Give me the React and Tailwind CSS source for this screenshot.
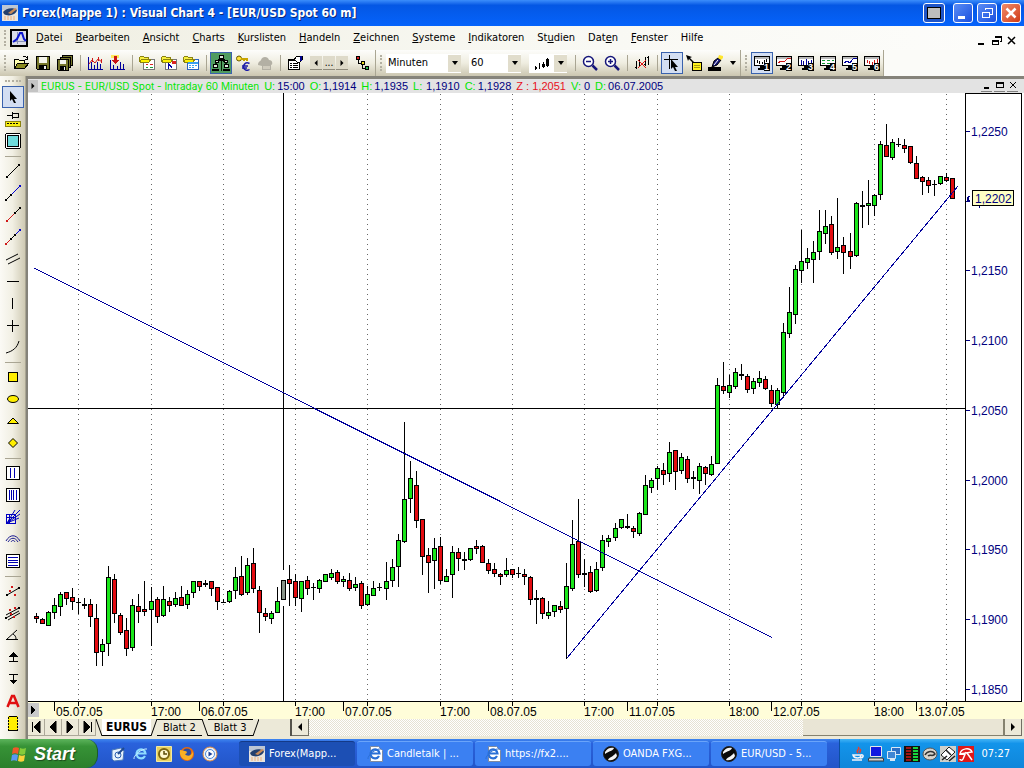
import { clsx } from "clsx";

// x, high, low, body top, body bottom, kind (u = up, d = down, x = doji)
const CANDLES = [
  [36, 613, 623, 616, 619, "d"], [42, 618, 624, 619, 624, "d"], [48, 611, 626, 612, 626, "u"],
  [54, 598, 619, 605, 613, "u"], [60, 592, 616, 594, 607, "u"], [66, 592, 605, 592, 599, "d"],
  [72, 588, 610, 597, 602, "d"], [78, 598, 614, 602, 603, "x"], [84, 598, 609, 604, 606, "x"],
  [90, 599, 627, 604, 617, "d"], [96, 604, 666, 618, 653, "d"], [102, 639, 666, 644, 652, "u"],
  [108, 566, 656, 577, 644, "u"], [114, 574, 623, 579, 614, "d"], [120, 613, 635, 615, 633, "d"],
  [126, 618, 656, 630, 649, "d"], [132, 599, 651, 605, 648, "u"], [138, 594, 623, 606, 612, "d"],
  [144, 581, 616, 609, 612, "d"], [151, 587, 646, 601, 610, "u"], [157, 597, 623, 599, 617, "d"],
  [163, 586, 617, 599, 616, "u"], [169, 597, 612, 601, 606, "d"], [175, 592, 607, 598, 605, "u"],
  [181, 586, 606, 597, 606, "d"], [187, 590, 609, 594, 605, "u"], [193, 581, 598, 581, 593, "u"],
  [199, 581, 591, 581, 587, "d"], [205, 580, 587, 583, 585, "x"], [211, 581, 596, 581, 589, "d"],
  [217, 587, 610, 587, 602, "d"], [223, 599, 603, 602, 603, "x"], [229, 590, 603, 591, 602, "u"],
  [235, 567, 599, 577, 591, "u"], [241, 556, 596, 576, 595, "d"], [247, 558, 595, 565, 593, "u"],
  [253, 548, 593, 563, 589, "d"], [259, 586, 633, 590, 613, "d"], [265, 608, 621, 613, 617, "d"],
  [271, 611, 624, 613, 619, "u"], [277, 587, 613, 601, 613, "u"], [283, 580, 600, 580, 600, "c"],
  [289, 565, 606, 579, 584, "d"], [295, 574, 606, 581, 598, "d"], [301, 581, 612, 581, 599, "u"],
  [307, 576, 595, 580, 589, "d"], [313, 583, 600, 587, 588, "x"], [319, 579, 593, 580, 589, "u"],
  [325, 574, 582, 574, 582, "u"], [331, 569, 580, 573, 578, "u"], [337, 570, 584, 572, 582, "d"],
  [343, 576, 587, 579, 582, "u"], [349, 573, 591, 580, 589, "d"], [355, 577, 591, 584, 588, "u"],
  [361, 581, 609, 583, 606, "d"], [367, 586, 606, 594, 605, "u"], [373, 581, 596, 588, 596, "u"],
  [379, 583, 591, 587, 588, "x"], [386, 562, 600, 581, 589, "u"], [392, 559, 587, 567, 581, "u"],
  [398, 534, 587, 540, 567, "u"], [404, 422, 543, 499, 542, "u"], [410, 461, 513, 478, 499, "u"],
  [416, 471, 528, 485, 521, "d"], [422, 519, 575, 519, 557, "d"], [428, 548, 593, 555, 563, "d"],
  [434, 538, 589, 548, 561, "u"], [440, 537, 584, 546, 581, "d"], [446, 569, 582, 576, 582, "u"],
  [452, 546, 598, 552, 575, "u"], [458, 548, 571, 552, 559, "d"], [464, 552, 570, 559, 561, "x"],
  [470, 548, 561, 548, 560, "u"], [476, 540, 554, 546, 549, "d"], [482, 545, 563, 546, 563, "d"],
  [488, 559, 574, 563, 571, "d"], [494, 563, 577, 569, 574, "d"], [500, 573, 585, 574, 577, "d"],
  [506, 558, 577, 570, 575, "u"], [512, 569, 578, 569, 575, "d"], [518, 567, 578, 573, 574, "x"],
  [524, 569, 585, 574, 577, "d"], [530, 576, 605, 577, 600, "d"], [536, 590, 624, 598, 600, "x"],
  [542, 597, 619, 598, 614, "d"], [548, 601, 619, 612, 616, "u"], [554, 605, 617, 605, 612, "u"],
  [560, 601, 613, 606, 610, "d"], [566, 563, 659, 586, 609, "u"], [572, 520, 591, 544, 589, "u"],
  [578, 499, 578, 541, 575, "d"], [584, 559, 587, 573, 575, "x"], [590, 566, 593, 572, 592, "d"],
  [596, 562, 592, 569, 591, "u"], [602, 535, 571, 540, 568, "u"], [608, 535, 547, 538, 542, "u"],
  [615, 523, 541, 528, 538, "u"], [621, 519, 529, 519, 528, "u"], [627, 514, 529, 526, 528, "x"],
  [633, 526, 538, 528, 532, "d"], [639, 512, 536, 513, 534, "u"], [645, 475, 515, 485, 515, "u"],
  [651, 478, 493, 480, 488, "u"], [657, 466, 490, 468, 479, "u"], [663, 463, 485, 470, 475, "d"],
  [669, 442, 482, 452, 474, "u"], [675, 450, 490, 450, 472, "d"], [681, 453, 474, 457, 471, "u"],
  [687, 456, 483, 459, 479, "d"], [693, 471, 489, 477, 479, "x"], [699, 463, 494, 466, 481, "u"],
  [705, 466, 485, 467, 474, "d"], [711, 456, 476, 464, 475, "u"], [717, 378, 464, 385, 464, "u"],
  [723, 362, 394, 386, 391, "d"], [729, 375, 398, 385, 393, "u"], [735, 368, 389, 372, 387, "u"],
  [741, 364, 380, 374, 376, "x"], [747, 374, 393, 376, 390, "d"], [753, 378, 394, 381, 389, "u"],
  [759, 371, 387, 378, 383, "u"], [765, 376, 390, 379, 389, "d"], [771, 385, 407, 390, 404, "d"],
  [777, 388, 408, 390, 405, "u"], [783, 323, 398, 332, 393, "u"], [789, 287, 338, 312, 334, "u"],
  [795, 265, 324, 269, 315, "u"], [801, 230, 283, 261, 271, "u"], [807, 248, 269, 258, 263, "u"],
  [813, 241, 283, 252, 260, "u"], [819, 210, 260, 231, 252, "u"], [825, 210, 244, 226, 234, "u"],
  [831, 216, 255, 224, 253, "d"], [837, 198, 259, 247, 252, "u"], [843, 237, 274, 245, 253, "d"],
  [850, 233, 269, 251, 257, "d"], [856, 202, 257, 203, 256, "u"], [862, 191, 228, 205, 207, "x"],
  [868, 180, 225, 203, 206, "u"], [874, 194, 216, 195, 206, "u"], [880, 141, 200, 144, 195, "u"],
  [886, 124, 157, 145, 157, "d"], [892, 139, 160, 142, 158, "u"], [898, 138, 147, 144, 145, "x"],
  [904, 139, 153, 145, 149, "d"], [910, 146, 164, 146, 163, "d"], [916, 156, 179, 163, 179, "d"],
  [922, 176, 195, 177, 182, "d"], [928, 177, 193, 180, 186, "d"], [934, 180, 196, 184, 185, "x"],
  [940, 176, 185, 176, 184, "u"], [946, 173, 182, 177, 181, "d"], [952, 178, 199, 178, 199, "d"],
];

const CANDLE_FILL = { u: "#1ae61a", d: "#e30b10", c: "#8a958a" };

const GRID = [78, 151, 223, 295, 367, 440, 512, 584, 657, 729, 801, 874, 946];
const DAY_TICKS = [54, 199, 343, 488, 627, 771, 916];

const TIME_LABELS = [
  [56, "05.07.05"], [151, "17:00"], [201, "06.07.05"], [295, "17:00"], [345, "07.07.05"],
  [440, "17:00"], [490, "08.07.05"], [584, "17:00"], [629, "11.07.05"], [729, "18:00"],
  [773, "12.07.05"], [874, "18:00"], [918, "13.07.05"],
];

// 1,2200 is covered by the last price tag
const PRICES = [
  [131, "1,2250"], [270, "1,2150"], [340, "1,2100"], [410, "1,2050"],
  [480, "1,2000"], [549, "1,1950"], [619, "1,1900"], [689, "1,1850"],
];

// label before / accelerator / after
const MENU = [
  ["", "D", "atei"], ["", "B", "earbeiten"], ["", "A", "nsicht"], ["", "C", "harts"],
  ["", "K", "urslisten"], ["", "H", "andeln"], ["", "Z", "eichnen"], ["", "S", "ysteme"],
  ["", "I", "ndikatoren"], ["St", "u", "dien"], ["Dat", "e", "n"], ["", "F", "enster"], ["Hilfe", "", ""],
];

const QUOTE = [
  ["U:", "15:00"], ["O:", "1,1914"], ["H:", "1,1935"], ["L:", "1,1910"], ["C:", "1,1928"],
  ["Z :", "1,2051"], ["V:", "0"], ["D:", "06.07.2005"],
];

const Icon = ({ children, className = "w-4 h-4", size = 16, smooth }) => (
  <svg
    viewBox={`0 0 ${size} ${size}`}
    className={clsx("shrink-0", className)}
    fill="none"
    stroke="#000"
    shapeRendering={smooth ? "auto" : "crispEdges"}
    aria-hidden="true"
  >
    {children}
  </svg>
);

const Pointer = ({ x = 0, y = 0 }) => (
  <path
    transform={`translate(${x} ${y})`}
    d="M0 0v10l2-2 2 4h2l-2-4h3z"
    fill="#000"
    stroke="none"
    shapeRendering="auto"
  />
);

/* ---------- toolbar icons ---------- */

const OpenIcon = () => (
  <Icon>
    <path d="M1.5 13.5v-9h4l1 1h5v3" fill="#ffffb0" />
    <path d="M1.5 13.5l3-5h11l-4 5z" fill="#8a8a20" />
    <path d="M9.500 2.500c2-2 4-1 5 1M14.500 1v3h-3" />
  </Icon>
);

const SaveIcon = () => (
  <Icon>
    <path d="M1.500 1.500h13v13h-12l-1-1z" fill="#77772b" />
    <path d="M4 2h8v6h-8z" fill="#f4f4ec" stroke="none" />
    <path d="M4 10h8v4h-8z" fill="#000" stroke="none" />
    <path d="M9 11h2v3h-2z" fill="#eee" stroke="none" />
  </Icon>
);

const SaveAllIcon = () => (
  <Icon>
    <path d="M5.500.500h10v10h-10z" fill="#77772b" />
    <path d="M3.500 2.500h10v10h-10z" fill="#77772b" />
    <path d="M.500 4.500h11v11h-10l-1-1z" fill="#77772b" />
    <path d="M3 5h6v4h-6z" fill="#f4f4ec" stroke="none" />
    <path d="M3 11h6v4h-6z" fill="#000" stroke="none" />
    <path d="M7 12h1v3h-1z" fill="#eee" stroke="none" />
  </Icon>
);

const BarsIcon = () => (
  <Icon>
    <path d="M1.500 2v12h14" stroke="#00009a" />
    <path d="M4.500 7v7M7.500 10v4M10.500 7v7M13.500 9v5" stroke="#00009a" />
    <path shapeRendering="auto" d="M2 9l3-4 3 3 3-4 4 3" stroke="#d01818" />
    <path d="M11.500 2v4M5.500 3v4M14.500 4v4" stroke="#d01818" />
  </Icon>
);

const BarsArrowIcon = () => (
  <Icon>
    <path d="M1.500 5v9h14" stroke="#00009a" />
    <path d="M4.500 10v4M8.500 11v3M11.500 7v7M14.500 9v5" stroke="#00009a" />
    <path d="M2 0h8v3h-8z" fill="#ffe95c" stroke="none" />
    <path d="M5 1h3v4h2l-3.500 4-3.500-4h2z" fill="#c81414" stroke="none" />
  </Icon>
);

const FolderChart = ({ variant }) => (
  <Icon>
    <path d="M4.500 4.500h11v10h-11z" fill="#fff" stroke={variant === "grid" ? "#2a62c0" : "#777"} />
    <path d="M.500 2.500l1-1h3l1 1h4v4h-9z" fill="#f8f040" stroke="#8a8210" />
    <path d="M1 6l2-2h9l-2 3h-9z" fill="#fff200" stroke="#8a8210" />
    {variant === "list" && (
      <>
        <path d="M7 9.500h2M11 9.500h3" stroke="#d22" />
        <path d="M7 12.500h2M11 12.500h3" stroke="#1a9a3a" />
      </>
    )}
    {variant === "news" && (
      <>
        <path d="M7.500 8v6M8 9l3 4" stroke="#0000a0" />
        <path d="M11 6h4v3h-4z" fill="#d22" stroke="none" />
      </>
    )}
    {variant === "grid" && (
      <>
        <path d="M5 7h10v2h-10z" fill="#3ba0f0" stroke="none" />
        <path d="M6 10.500h2M9 10.500h2M12 10.500h2M6 12.500h2M9 12.500h2" stroke="#3ba0f0" />
      </>
    )}
  </Icon>
);

const NetworkIcon = () => (
  <Icon size={20} className="w-5 h-5">
    <path d="M10.500 6v12M4.500 14v-3l5-4M15.500 14v-3l-5-4" stroke="#041c04" />
    <path d="M8.500 2.500h4v3h-4zM2.500 11.500h4v3h-4zM13.500 11.500h4v3h-4zM4.500 7.500h3v2h-3zM13.500 7.500h3v2h-3z" fill="#dfe8df" />
    <path d="M7 6.500h7M1 16.500h7M12 16.500h7" strokeWidth="2" />
  </Icon>
);

const KeyEuroIcon = () => (
  <Icon smooth>
    <circle cx="4" cy="3.500" r="2.500" fill="#ffe33a" stroke="#6b5a00" />
    <path d="M6 4h6v2M9 4v2" stroke="#c9a400" strokeWidth="2" />
    <path d="M14.500 8.500c-4-2-6 1-6 3.500s3 4.500 6 2.500M7 11h6M7 13h5" stroke="#1c1ca8" strokeWidth="1.500" />
  </Icon>
);

const CloudIcon = () => (
  <Icon smooth>
    <path d="M1 10c0-4 3-4 3-5 1-4 7-4 8 0 4 0 4 5 2 5v5H5v-4z" fill="#b3b0a4" stroke="none" />
    <path d="M6 11h7v3H6z" fill="#cfcbbd" stroke="none" />
  </Icon>
);

const PropertiesIcon = () => (
  <Icon>
    <path d="M1.500 4.500h11v10h-11z" fill="#fff" />
    <path d="M1 4h11v2h-11z" fill="#000" stroke="none" />
    <path d="M3 8.500h2M6 8.500h5M3 10.500h2M6 10.500h5M3 12.500h2M6 12.500h5" />
    <path d="M7 5l3-4h5v4l-3 3z" fill="#fff" />
    <path d="M13.500 1v5" stroke="#00008b" strokeWidth="2" />
  </Icon>
);

const StepsIcon = () => (
  <Icon>
    <path d="M3.500 5v3h3M7.500 9v4h3" />
    <path d="M1.500 1.500h3v3h-3z" fill="#e02020" />
    <path d="M6.500 6.500h3v3h-3z" fill="#f4e020" />
    <path d="M10.500 11.500h3v3h-3z" fill="#2cc050" />
  </Icon>
);

const CandlesIcon = () => (
  <Icon>
    <path d="M2.500 11v4M6.500 8v6M10.500 7v6M14.500 3v9" />
    <path d="M2 12h2v2h-2zM9 9h3v3h-3zM13 4h3v7h-3z" fill="#000" stroke="none" />
  </Icon>
);

const ZoomIcon = ({ plus }) => (
  <Icon smooth>
    <circle cx="6.500" cy="6.500" r="5" fill="#fff" stroke="#16167a" strokeWidth="1.500" />
    <path d="M10.500 10.500l4.500 4.500" stroke="#16167a" strokeWidth="2.500" />
    <path d={plus ? "M4 6.500h5M6.500 4v5" : "M4 6.500h5"} stroke="#16167a" strokeWidth="1.500" />
  </Icon>
);

const DeleteBarsIcon = () => (
  <Icon>
    <path d="M2.500 6v8M1 12.500h2M5.500 4v8M4 5.500h2M11.500 2v9M10 9.500h2M14.500 1v9M13 2.500h2" />
    <path shapeRendering="auto" d="M4 5l8 8M12 5l-8 8" stroke="#e01818" />
  </Icon>
);

const CrossPointerIcon = () => (
  <Icon>
    <path d="M0 4.500h14M5.500 0v14" />
    <Pointer x={7} y={4} />
  </Icon>
);

const NotePointerIcon = () => (
  <Icon>
    <path d="M6.500 7.500h9v8h-9z" fill="#fff01c" />
    <path d="M8 10.500h6M8 12.500h6" stroke="#a79b10" />
    <path shapeRendering="auto" d="M0 0l6 2-2 1 4 4-1 1-4-4-1 2z" fill="#000" stroke="none" />
  </Icon>
);

const PenIcon = () => (
  <Icon smooth>
    <path d="M0 12h13v4H0z" fill="#000" stroke="none" />
    <path d="M4 12l2-6 4-3 3 2-4 5z" fill="#16167a" stroke="#000" />
    <path d="M6 10l4-5" stroke="#fff" />
    <path d="M11 0l4 1v2l-2 2-3-2z" fill="#ffe62e" stroke="none" />
  </Icon>
);

const MONITORS = [
  ["#000", "M3.500 5v3M5.500 6v3M8.500 7v2M10.500 5v3M12.500 4v3"],
  ["#d01818", "M2 8l3-2 3 1 3-3 4-1"],
  ["#00009a", "M3.500 5v5M5.500 6v4M8.500 4v6M10.500 6v4M13.500 5v5"],
  ["#159a35", "M2 5.500h3M7 5.500h3M12 5.500h2M2 8.500h3M7 8.500h3"],
  ["#00009a", "M2 8l3-2 3 2 3-4 4-1"],
  ["#d01818", "M3.500 5v3M5.500 6v3M8.500 7v3M10.500 5v3M13.500 4v4"],
];

const MonitorIcon = ({ n }) => (
  <Icon>
    <path d="M.500 1.500h15v9h-15z" fill="#fff" />
    <path d="M1 2h14v2h-14z" fill="#b9b9b9" stroke="none" />
    <path d={MONITORS[n - 1][1]} stroke={MONITORS[n - 1][0]} />
    <path d="M6 11h4v2h-4zM4 13h8v2h-8z" fill="#000" stroke="none" />
    <path d="M10 8h6v8h-6z" fill="#000" stroke="none" />
    <text x="10" y="15" fontSize="9" fontWeight="bold" fill="#fff" stroke="none" fontFamily="Liberation Sans, sans-serif">
      {n}
    </text>
  </Icon>
);

/* ---------- drawing tools in the side bar ---------- */

const Dots = ({ points, fill = "#000" }) =>
  points.map(([x, y]) => <rect key={`${x}-${y}`} x={x - 1} y={y - 1} width="2" height="2" fill={fill} stroke="none" />);

const SIDE_TOOLS = [
  [
    ["Auswahl", <Pointer key="p" x={5} y={2} />],
    ["Anheften", <g key="p"><path d="M2 4.500h5M7.500 1v7M8 2.500h5v4h-5" /><path d="M.500 10.500h15v5h-15z" fill="#f8ee10" stroke="#8a8210" /><path d="M2 12.500h12" strokeDasharray="2 1" /></g>],
    ["Bereich", <g key="p"><rect x=".500" y=".500" width="15" height="15" rx="2" fill="#fff" /><path d="M2.500 2.500h11v11h-11z" fill="#6fdcdc" /></g>],
  ],
  [
    ["Linie", <g key="p" shapeRendering="auto"><path d="M2 14L14 2" /><Dots points={[[2, 14], [14, 2]]} /></g>],
    ["Strahl", <g key="p" shapeRendering="auto"><path d="M1 15l5-5" /><path d="M6 10L15 1" stroke="#0000d0" /><Dots points={[[1, 15], [6, 10]]} /><Dots points={[[15, 1]]} fill="#0000d0" /></g>],
    ["Strahl links", <g key="p" shapeRendering="auto"><path d="M10 6l5-5" /><path d="M2 14l8-8" stroke="#d01818" /><Dots points={[[10, 6], [15, 1]]} /><Dots points={[[2, 14]]} fill="#d01818" /></g>],
    ["Gerade", <g key="p" shapeRendering="auto"><path d="M1 15l5-5" stroke="#d01818" /><path d="M6 10l4-4" /><path d="M10 6l5-5" stroke="#0000d0" /><Dots points={[[6, 10], [10, 6]]} /><Dots points={[[1, 15]]} fill="#d01818" /><Dots points={[[15, 1]]} fill="#0000d0" /></g>],
    ["Parallelen", <path key="p" shapeRendering="auto" d="M1 9L13 3M3 13l12-6" />],
    ["Horizontale", <path key="p" d="M2 8.500h12" />],
    ["Vertikale", <path key="p" d="M7.500 3v11" />],
    ["Kreuz", <path key="p" d="M2 8.500h12M7.500 3v12" />],
    ["Kurve", <path key="p" shapeRendering="auto" d="M1 14c7-2 11-5 13-12" />],
  ],
  [
    ["Rechteck", <path key="p" d="M3.500 3.500h9v9h-9z" fill="#ffee00" />],
    ["Ellipse", <ellipse key="p" cx="8" cy="8" rx="5.500" ry="3.500" fill="#ffee00" shapeRendering="auto" />],
    ["Dreieck", <path key="p" d="M2.500 10.500h11L8 5z" fill="#ffee00" shapeRendering="auto" />],
    ["Raute", <path key="p" d="M8 3.500L12.500 8 8 12.500 3.500 8z" fill="#ffee00" shapeRendering="auto" />],
  ],
  [
    ["Zyklen", <g key="p"><path d="M1.500 1.500h13v13h-13z" fill="#fff" /><path d="M5.500 3v10M9.500 3v10" stroke="#0000b0" /></g>],
    ["Fibonacci Zeit", <g key="p"><path d="M1.500 1.500h13v13h-13z" fill="#fff" /><path d="M4.500 3v10M6.500 3v10M8.500 3v10M11.500 3v10" stroke="#0000b0" /></g>],
    ["Gann", <g key="p" stroke="#0000c0"><path d="M1.500 5.500h9v9h-9zM1 8.500h9M4.500 5v9" /><path shapeRendering="auto" d="M2 14L15 1M2 14L15 5M2 14L10 1M2 14l12-5" /></g>],
    ["Bögen", <path key="p" shapeRendering="auto" stroke="#1a1a90" d="M1 10c4-7 10-7 14 0M3 11c3-5 7-5 10 0M6 11c1-2 3-2 4 0" />],
    ["Fibonacci", <g key="p"><path d="M1.500 1.500h13v13h-13z" fill="#fff" /><path d="M3 4.500h10M3 7.500h10M3 9.500h10M3 12.500h10" stroke="#0000b0" /></g>],
  ],
  [
    ["Regression", <g key="p" shapeRendering="auto"><path d="M2 12L14 5" /><Dots points={[[2, 12], [14, 5]]} /><Dots points={[[7, 4], [10, 12], [5, 8]]} fill="#d01818" /></g>],
    ["Kanal", <g key="p" shapeRendering="auto"><path d="M1 10L14 3M1 13L14 6M3 15l12-7" /><Dots points={[[1, 13], [14, 3]]} /><Dots points={[[5, 5], [10, 3], [9, 12], [6, 9]]} fill="#d01818" /></g>],
    ["Winkel", <path key="p" shapeRendering="auto" d="M1.500 12.500L12 3M1 12.500h12M8 7c2 1 3 3 3 5" />],
    ["Hoch", <path key="p" d="M4 12.500h9M8.500 5v7M8.500 4l-3 3h6z" fill="#000" />],
    ["Tief", <path key="p" d="M4 3.500h9M8.500 4v7M8.500 12l-3-3h6z" fill="#000" />],
    ["Text", <path key="p" shapeRendering="auto" stroke="#e01010" strokeWidth="2.500" d="M2.500 14L7 3h2l4.500 11M4 10h8" />],
    ["Notiz", <g key="p"><path d="M3.500 1.500h9v14h-9z" fill="#ffee00" /><path d="M3.500 1v14M12.500 1v14" stroke="#ffee00" strokeDasharray="1 2" /></g>],
  ],
];

/* ---------- small parts ---------- */

const ToolButton = ({ label, active, green, className, children }) => (
  <button
    aria-label={label}
    className={clsx(
      "w-[22px] h-[22px] shrink-0 flex items-center justify-center",
      active && "bg-[#d3def2] border border-[#3a62ad]",
      green && "bg-[#4f9b5f] border border-[#3a62ad]",
      className
    )}
  >
    {children}
  </button>
);

const Sep = () => <span className="w-2 h-4 shrink-0 flex justify-center"><span className="w-px bg-[#a9a593]" /></span>;

const Grip = () => (
  <span className="w-[10px] h-4 shrink-0 flex justify-center">
    <span className="border-l-2 border-dotted border-[#b3b0a2]" />
  </span>
);

const Arrow = ({ dir = "down", className = "w-2 h-2" }) => {
  const d = { down: "M1 2h6L4 6z", left: "M6 0v8L2 4z", right: "M2 0v8l4-4z" }[dir];
  return (
    <svg viewBox="0 0 8 8" className={className} fill="#000" aria-hidden="true">
      <path d={d} />
    </svg>
  );
};

const Combo = ({ label, value, className }) => (
  <label className={clsx("relative shrink-0 h-[19px] bg-white block", className)}>
    <select
      aria-label={label}
      defaultValue={value}
      className="appearance-none w-full h-full pl-[2px] pr-4 bg-transparent text-[11px] leading-4 outline-none"
    >
      <option>{value}</option>
    </select>
    <span className="absolute right-0 top-0 bottom-0 my-px w-[13px] bg-[#e1ddcc] flex items-center justify-center pointer-events-none">
      <Arrow />
    </span>
  </label>
);

const TitleBar = () => (
  <header className="h-[26px] flex items-center gap-1 pl-[2px] pr-[3px] bg-linear-to-b from-[#3b8dfb] via-[#0457e4] via-20% to-[#0563fb]">
    <VcIcon />
    <h1
      className="flex-1 truncate text-xs leading-5 font-bold text-white [text-shadow:1px_1px_0_#0b2a7a]"
      style={{ fontFamily: '"DejaVu Sans Condensed", "DejaVu Sans", sans-serif' }}
    >
      Forex(Mappe 1) : Visual Chart 4 - [EUR/USD Spot 60 m]
    </h1>
    <button aria-label="Anzeige" className="w-[22px] h-5 mr-1 rounded-[3px] border border-white bg-[#1f55c8] flex items-center justify-center">
      <span className="w-[14px] h-3 border border-black bg-[#bdbdbd]" />
    </button>
    <button aria-label="Minimieren" className="w-5 h-5 rounded-[3px] border border-white bg-linear-to-br from-[#5a8cf5] to-[#1c4ede]">
      <Icon size={18} className="w-[18px] h-[18px]"><path d="M4 13h7" stroke="#fff" strokeWidth="3" /></Icon>
    </button>
    <button aria-label="Wiederherstellen" className="w-5 h-5 rounded-[3px] border border-white bg-linear-to-br from-[#5a8cf5] to-[#1c4ede]">
      <Icon size={18} className="w-[18px] h-[18px]">
        <path d="M7.500 6V4.500h7v6H12M7 4h8M4.500 8.500h7v5h-7zM4 8h8" stroke="#fff" />
      </Icon>
    </button>
    <button aria-label="Schließen" className="w-5 h-5 rounded-[3px] border border-white bg-linear-to-br from-[#f08a68] to-[#cf3810]">
      <Icon size={18} smooth className="w-[18px] h-[18px]"><path d="M4.500 4.500l9 9M13.500 4.500l-9 9" stroke="#fff" strokeWidth="2.500" /></Icon>
    </button>
  </header>
);

const VcIcon = () => (
  <Icon smooth>
    <path d="M0 0h16v16H0z" fill="#e8e4de" stroke="none" />
    <path d="M0 0h16v5H0z" fill="#bcc6d4" stroke="none" />
    <path d="M1 7c3-4 10-5 14-2-1 5-9 7-13 4z" fill="#24406e" stroke="none" />
    <path d="M6 8l7-5 2 1-6 5z" fill="#c98a58" stroke="none" />
    <path d="M2 12h12M2 14h12" stroke="#eeae78" strokeDasharray="2 1" />
  </Icon>
);

const MenuBar = () => (
  <nav className="h-6 flex items-center bg-linear-to-r from-[#efeee1] via-[#f8f8f2] to-[#fdfdfb] pr-[5px]">
    <Grip />
    <Icon size={18} className="w-[18px] h-[18px] mr-1">
      <path d="M1 1h16v16H1z" fill="#d9dce8" strokeWidth="2" />
      <path d="M3 12.500h12M7.500 3v12" stroke="#8a93b8" />
      <path shapeRendering="auto" d="M3 13l4-3 3-6h2l2 6 2 2" stroke="#0a14d0" strokeWidth="2" />
    </Icon>
    <div className="flex-1 flex overflow-hidden">
      {MENU.map(([pre, key, post]) => (
        <button key={pre + key + post} className="pl-[7px] pr-[6px] first:pl-1 leading-4 shrink-0">
          {pre}
          <span className="underline">{key}</span>
          {post}
        </button>
      ))}
    </div>
    <div className="flex items-center pt-1">
      <button aria-label="Fenster minimieren" className="w-[15px] h-4"><Icon size={15} className="w-[15px] h-[15px]"><path d="M4 11h6" strokeWidth="2" /></Icon></button>
      <button aria-label="Fenster wiederherstellen" className="w-[15px] h-4"><Icon size={15} className="w-[15px] h-[15px]"><path d="M6.500 5V3.500h6v5H11M6 4h7M3.500 7.500h6v4h-6zM3 8h7" /></Icon></button>
      <button aria-label="Fenster schließen" className="w-[15px] h-4"><Icon size={15} smooth className="w-[15px] h-[15px]"><path d="M4 4l7 7M11 4l-7 7" strokeWidth="1.500" /></Icon></button>
    </div>
  </nav>
);

const BAR = "h-full flex items-center bg-linear-to-b from-[#fdfdfb] via-[#efede0] to-[#cbc6b0] border-r border-[#aaa693]";

const ToolBar = () => (
  <div className="h-[26px] flex bg-[#fbfbf8] overflow-hidden">
    <div className={clsx(BAR, "w-[376px] shrink-0")}>
      <Grip />
      <ToolButton label="Öffnen"><OpenIcon /></ToolButton>
      <ToolButton label="Speichern"><SaveIcon /></ToolButton>
      <ToolButton label="Alle speichern"><SaveAllIcon /></ToolButton>
      <Sep />
      <ToolButton label="Neuer Chart"><BarsIcon /></ToolButton>
      <ToolButton label="Chart einfügen"><BarsArrowIcon /></ToolButton>
      <Sep />
      <ToolButton label="Kursliste"><FolderChart variant="list" /></ToolButton>
      <ToolButton label="Nachrichten"><FolderChart variant="news" /></ToolButton>
      <ToolButton label="Tabelle"><FolderChart variant="grid" /></ToolButton>
      <Sep />
      <ToolButton label="Verbindung" green><NetworkIcon /></ToolButton>
      <ToolButton label="Konto"><KeyEuroIcon /></ToolButton>
      <ToolButton label="Offline"><CloudIcon /></ToolButton>
      <Sep />
      <ToolButton label="Eigenschaften"><PropertiesIcon /></ToolButton>
      <div className="flex mx-1 h-[14px] gap-px leading-3">
        <button aria-label="Zurück" className="w-3 bg-[#dedac9] border-b border-[#8f8b7c] flex items-center justify-center"><Arrow dir="left" className="w-[6px] h-[6px]" /></button>
        <button className="w-3 bg-[#dedac9] border-b border-[#8f8b7c] text-[10px] leading-[10px]">...</button>
        <button aria-label="Weiter" className="w-3 bg-[#dedac9] border-b border-[#8f8b7c] flex items-center justify-center"><Arrow dir="right" className="w-[6px] h-[6px]" /></button>
      </div>
      <ToolButton label="Abfolge"><StepsIcon /></ToolButton>
    </div>
    <div className={clsx(BAR, "shrink-0 w-[365px]")}>
      <Grip />
      <Combo label="Kompression" value="Minuten" className="w-[75px] mr-2" />
      <Combo label="Einheiten" value="60" className="w-[52px] mr-2" />
      <button aria-label="Darstellung" className="w-[38px] h-[19px] mr-1 shrink-0 bg-white flex items-center justify-between pl-1">
        <CandlesIcon />
        <span className="w-[13px] h-[17px] bg-[#e1ddcc] flex items-center justify-center"><Arrow /></span>
      </button>
      <Sep />
      <ToolButton label="Verkleinern"><ZoomIcon /></ToolButton>
      <ToolButton label="Vergrößern"><ZoomIcon plus /></ToolButton>
      <Sep />
      <ToolButton label="Löschen"><DeleteBarsIcon /></ToolButton>
      <Sep />
      <ToolButton label="Fadenkreuz" active><CrossPointerIcon /></ToolButton>
      <ToolButton label="Info"><NotePointerIcon /></ToolButton>
      <ToolButton label="Stift"><PenIcon /></ToolButton>
      <button aria-label="Stiftfarbe" className="w-3 h-4 shrink-0 flex items-center justify-center"><Arrow /></button>
    </div>
    <div className={clsx(BAR, "shrink-0")}>
      <Grip />
      {MONITORS.map((m, i) => (
        <ToolButton key={i} label={`Ansicht ${i + 1}`} active={i === 0}><MonitorIcon n={i + 1} /></ToolButton>
      ))}
    </div>
  </div>
);

const SideBar = () => (
  <aside className="w-[26px] shrink-0 flex flex-col items-center bg-linear-to-r from-[#fbfaf5] via-[#f1efe3] to-[#cfcab4] border-r border-[#aaa693]">
    <span className="h-[10px] flex items-center"><span className="w-4 border-t-2 border-dotted border-[#b3b0a2]" /></span>
    {SIDE_TOOLS.map((group, g) => (
      <div key={g} className="flex flex-col">
        {g > 0 && <span className="h-2 flex items-center px-[3px]"><span className="w-full h-px bg-[#a9a593]" /></span>}
        {group.map(([label, shape]) => (
          <ToolButton key={label} label={label} active={label === "Auswahl"}>
            <Icon>{shape}</Icon>
          </ToolButton>
        ))}
      </div>
    ))}
  </aside>
);

const QuoteBar = () => (
  <div className="h-[14px] flex items-center bg-[#e3e3e3] text-[11px] leading-3 whitespace-nowrap overflow-hidden">
    <button aria-label="Aufklappen" className="w-[10px] h-3 shrink-0 bg-[#c4c4c4] flex items-center justify-center"><Arrow dir="right" className="w-[6px] h-[6px]" /></button>
    <div className="flex-1 flex items-center gap-[5px] pl-[3px]" style={{ fontFamily: '"Liberation Sans", Arial, sans-serif' }}>
      <span className="min-w-[218px] text-[#00e600] text-[10px]" style={{ fontFamily: 'Inter, "Liberation Sans", sans-serif' }}>
        EURUS - EUR/USD Spot - Intraday 60 Minuten
      </span>
      {QUOTE.map(([k, v]) => (
        <span key={k} className={clsx("flex", k === "Z :" ? "text-[#e8101c]" : "text-[#000080]")}>
          <span className={clsx(k === "Z :" ? "w-4" : "w-[13px] text-[#00e600]")}>{k}</span>
          {v}
        </span>
      ))}
    </div>
    <div className="flex gap-[2px] pr-[6px]">
      {[["Chart minimieren", "M2 7.500h5M2 6.500h5"], ["Chart maximieren", "M1.500 1.500h7v5h-7zM1 2.500h8"], ["Chart schließen", "M2 1l6 6M8 1l-6 6"]].map(([label, d]) => (
        <button key={label} aria-label={label} className="w-[11px] h-[11px] border-b border-[#808080] flex items-center justify-center">
          <Icon size={10} className="w-[10px] h-[10px]"><path d={d} /></Icon>
        </button>
      ))}
    </div>
  </div>
);

const Candle = ({ data: [x, high, low, top, bottom, kind] }) => (
  <g>
    <rect x={x} y={high} width="1" height={low - high} fill="#000" />
    <rect x={x - 2} y={top} width="5" height={bottom - top} fill="#000" />
    {kind !== "x" && (
      <rect x={x - 1} y={top + 1} width="3" height={bottom - top - 2} fill={CANDLE_FILL[kind]} />
    )}
  </g>
);

const Chart = () => (
  <svg
    viewBox="28 93 996 626"
    className="block w-full h-auto bg-white"
    role="img"
    aria-label="EUR/USD Spot 60 Minuten"
    shapeRendering="crispEdges"
    fontFamily="Liberation Sans, Arial, sans-serif"
    fontSize="12"
  >
    {GRID.map((x) => (
      <line key={x} x1={x + 0.5} x2={x + 0.5} y1="94" y2="701" stroke="#666" strokeDasharray="1 4" />
    ))}

    {/* crosshair */}
    <path d="M28 408.500h937" stroke="#000" />
    <path d="M283.500 93v477M283.500 606v95" stroke="#000" />

    {CANDLES.map((c) => (
      <Candle key={c[0]} data={c} />
    ))}

    {/* trend lines */}
    <path d="M34 268L772 637.500M567 658L958 186" stroke="#00009c" fill="none" />

    {/* time axis */}
    <rect x="28" y="702" width="996" height="17" fill="#fffdd9" />
    <rect x="28" y="703" width="11" height="14" fill="#c9c9c9" />
    <path d="M31 706v8l4-4z" fill="#000" />
    <path d="M28 701.500h994" stroke="#000" />
    {GRID.map((x) => (
      <line key={x} x1={x + 0.5} x2={x + 0.5} y1="701" y2="706" stroke="#000" />
    ))}
    {DAY_TICKS.map((x) => (
      <line key={x} x1={x + 0.5} x2={x + 0.5} y1="701" y2="711" stroke="#000" />
    ))}
    {TIME_LABELS.map(([x, t]) => (
      <text key={x} x={x} y="716" fill="#000">{t}</text>
    ))}

    {/* price axis */}
    <path d="M965.500 701V93.500H1021.500V702" stroke="#000" fill="none" />
    {PRICES.map(([y, t]) => (
      <g key={t}>
        <line x1="966" x2="970" y1={y + 0.5} y2={y + 0.5} stroke="#000080" />
        <text x="971" y={y + 5} fill="#000080">{t}</text>
      </g>
    ))}
    <path d="M970 196l-3 2 2 1-2 1h3M966 201.500h4M979.500 206v2" stroke="#000080" fill="none" />
    <rect x="972.500" y="190.500" width="41" height="15" fill="#ffffc4" stroke="#000" />
    <text x="975" y="203" fill="#000080">1,2202</text>
  </svg>
);

const Slant = ({ back }) => (
  <svg viewBox="0 0 6 17" className="w-[6px] h-[17px] shrink-0" stroke="#000" fill="none" aria-hidden="true">
    <path d={back ? "M0 0l6 17" : "M6 0L0 17"} />
  </svg>
);

const NAV = ["M2.500 1v10M10 0v12L4 6z", "M9 0v12L3 6z", "M3 0v12l6-6z", "M10.500 1v10M3 0v12l6-6z"];
const DITHER = { backgroundImage: "repeating-conic-gradient(#fff 0 25%, #e6e2d3 0 50%)", backgroundSize: "2px 2px" };

const SheetTabs = () => (
  <div className="h-5 pb-[3px] flex bg-[#ece9d8]">
    {NAV.map((d, i) => (
      <button key={d} aria-label={["Erstes", "Voriges", "Nächstes", "Letztes"][i]} className="w-[17px] shrink-0 border-r border-b border-[#aca899] flex items-center justify-center">
        <svg viewBox="0 0 13 12" className="w-[13px] h-3" fill="#000" stroke="#000" strokeWidth="1" aria-hidden="true"><path d={d} /></svg>
      </button>
    ))}
    <div className="flex w-[192px] shrink-0 text-[11px] leading-4">
      <Slant back />
      <button className="bg-white px-1 font-bold text-xs leading-4 border-b border-black">EURUS</button>
      <Slant />
      <button className="px-[6px] border-y border-black">Blatt 2</button>
      <Slant back />
      <button className="px-[6px] border-y border-black">Blatt 3</button>
      <Slant />
    </div>
    <span className="w-1 shrink-0 border-r-2 border-[#55534a]" />
    <button aria-label="Links scrollen" className="w-[17px] shrink-0 bg-[#ece9d8] border-r border-b border-[#716f64] flex items-center justify-center"><Arrow dir="left" /></button>
    <div className="flex-1 flex justify-end" style={DITHER}>
      <div className="w-[29%] bg-[#e9e5d5] border-r-2 border-b border-[#85826f]" />
    </div>
    <button aria-label="Rechts scrollen" className="w-[17px] mr-[2px] shrink-0 border-r border-b border-[#716f64] flex items-center justify-center"><Arrow dir="right" /></button>
  </div>
);

/* ---------- task bar ---------- */

const IeIcon = ({ page }) => (
  <Icon smooth>
    {page && <path d="M3.500.500h8l4 4v11h-12z" fill="#fff" stroke="#7e8aa0" />}
    <path d="M12 10a4.500 4.500 0 1 1 .500-2.500h-8" stroke={page ? "#2a6fd6" : "#8fdcff"} strokeWidth="2.200" />
    <path d="M1 13C0 10 9 2 14 3" stroke={page ? "#2a6fd6" : "#c8f0ff"} />
  </Icon>
);

const OandaIcon = () => (
  <Icon smooth>
    <circle cx="8" cy="8" r="7.500" fill="#0a0a0a" stroke="#222" />
    <path d="M2 6c2-4 6-5 9-4-1 3-5 3-9 6zM14 10c-2 4-6 5-9 4 1-3 5-3 8-7z" fill="#f4f4f4" stroke="none" />
  </Icon>
);

const TASKS = [
  ["Forex(Mapp...", <VcIcon key="i" />],
  ["Candletalk | ...", <IeIcon key="i" page />],
  ["https://fx2....", <IeIcon key="i" page />],
  ["OANDA FXG...", <OandaIcon key="i" />],
  ["EUR/USD - 5...", <OandaIcon key="i" />],
];

const QUICK = [
  ["Desktop", <g key="q"><path d="M2 4l9-2 3 3-1 9-9 1-2-2z" fill="#e8f2fc" stroke="#4a78b8" /><circle cx="8" cy="9" r="3" stroke="#2a5fb0" /><path d="M8 8l6-6" stroke="#1e4a90" strokeWidth="2" /></g>],
  ["Internet Explorer", null],
  ["Outlook", <g key="q"><path d="M.500.500h15v15H.500z" fill="#e8d060" stroke="#f4eaa0" /><circle cx="8" cy="8" r="5" fill="#fff8d0" stroke="#7a6410" strokeWidth="2" /><path d="M8 5v3h3" stroke="#5a4808" strokeWidth="1.500" /></g>],
  ["Firefox", <g key="q"><circle cx="8" cy="8" r="7" fill="#e66a12" stroke="none" /><circle cx="8" cy="6.500" r="4" fill="#2b4ca0" stroke="none" /><path d="M1 4c2 0 3 1 5 1 3 0 2 3 0 3 2 3 7 2 8-3 1 6-3 10-7 9S0 9 1 4z" fill="#f8b024" stroke="none" /></g>],
  ["Media Player", <g key="q"><circle cx="8" cy="8" r="7" fill="#e9f0fa" stroke="#e08a3c" /><circle cx="8" cy="8" r="4.500" fill="#fff" stroke="#4a86d8" /><path d="M6.500 5.500v5l4-2.500z" fill="#1b3f9a" stroke="none" /></g>],
];

const TRAY = [
  ["Java", <g key="t"><path d="M8 1c3 2-3 3 0 6M10 3c2 2-1 2 0 4" stroke="#e8402c" strokeWidth="1.500" /><path d="M3 9h8c0 4-7 4-8 0zM11 9c3-1 3 3-1 3M2 14h10" stroke="#f2f4fa" strokeWidth="1.500" /></g>],
  ["Bildschirm", <g key="t"><path d="M2.500.500h11v10h-11z" fill="#1018e0" stroke="#e6e6e6" /><path d="M1 12h14l1 3H0z" fill="#d4d4d4" stroke="#333" /></g>],
  ["Netzwerk", <g key="t"><path d="M5.500 1.500h9v7h-9z" fill="#2c6fc4" stroke="#d8e8f6" /><path d="M1.500 5.500h8v7h-8z" fill="#3f86d4" stroke="#d8e8f6" /><path d="M4 14h5" stroke="#d8e8f6" strokeWidth="2" /></g>],
  ["Auslastung", <g key="t"><path d="M0 0h16v16H0z" fill="#101010" stroke="none" /><path d="M4.500 1v14" stroke="#a01414" strokeWidth="5" strokeDasharray="2 1" /><path d="M11.500 1v14" stroke="#18d43c" strokeWidth="5" strokeDasharray="2 1" /></g>],
  ["Maus", <g key="t"><ellipse cx="8" cy="8" rx="7" ry="6" fill="#d8d4cc" stroke="#555" /><path d="M3 9c2-4 8-5 10-1-2 3-5 0-7 2" stroke="#333" strokeWidth="1.500" /></g>],
  ["Modem", <g key="t"><path d="M0 0h16v16H0z" fill="#d0d0ca" stroke="none" /><path d="M1 9l8-8 6 5-8 8z" fill="#fff" stroke="#222" /><path d="M2 14l5-4M9 15l6-5M6 4l5 5" stroke="#222" strokeWidth="1.500" /></g>],
  ["Antivirus", <g key="t"><path d="M0 0h16v16H0z" fill="#e01818" stroke="none" /><path d="M2 8C3 2 12 1 14 6zM8 6l-3 7c-1 2-3 1-3 0M9 7l5 7" stroke="#fff" strokeWidth="1.500" /></g>],
];

const TaskBar = () => (
  <footer className="h-[29px] flex text-white bg-linear-to-b from-[#3f86f0] via-[#2a62dc] via-15% to-[#2355c8]">
    <button className="w-[98px] shrink-0 rounded-r-xl flex items-center gap-[6px] pl-[10px] bg-linear-to-b from-[#5cb45c] via-[#379337] via-25% to-[#2c7f2c] border-r border-[#1c5a2a]">
      <Icon size={18} smooth className="w-[18px] h-[18px]">
        <path d="M3 3c2-1 4-1 6 0L8 9C6 8 4 8 2 9z" fill="#f0582a" stroke="none" />
        <path d="M10 3c2 1 4 1 6 0l-1 6c-2 1-4 1-6 0z" fill="#86cc3a" stroke="none" />
        <path d="M2 10c2-1 4-1 6 0l-1 6c-2-1-4-1-6 0z" fill="#5a98f4" stroke="none" />
        <path d="M9 10c2 1 4 1 6 0l-1 6c-2 1-4 1-6 0z" fill="#fcd23a" stroke="none" />
      </Icon>
      <span className="text-lg leading-5 font-bold italic [text-shadow:1px_1px_1px_#1c4a1c]" style={{ fontFamily: '"Liberation Sans", Arial, sans-serif' }}>Start</span>
    </button>
    <div className="flex items-center gap-[7px] pl-3 w-[141px] shrink-0">
      {QUICK.map(([label, shape]) => (
        <button key={label} aria-label={label}>{shape ? <Icon smooth>{shape}</Icon> : <IeIcon />}</button>
      ))}
    </div>
    <div className="flex-1 flex items-center gap-[2px] pr-3 min-w-0">
      {TASKS.map(([label, icon], i) => (
        <button
          key={label}
          className={clsx(
            "w-[116px] h-[25px] rounded-[3px] flex items-center gap-1 pl-[10px] text-[11px] leading-4 whitespace-nowrap overflow-hidden",
            i === 0 ? "bg-[#1c4fb4] border-t border-[#143a88]" : "bg-[#3b80f2] border-t border-[#6aa4fa]"
          )}
        >
          {icon}
          {label}
        </button>
      ))}
    </div>
    <div className="shrink-0 flex items-center gap-[2px] pl-[10px] pr-[14px] bg-linear-to-b from-[#3fb4f6] via-[#1394ea] via-15% to-[#0f86da] border-l border-[#0a4fa0]">
      {TRAY.map(([label, shape]) => (
        <Icon key={label} smooth>{shape}</Icon>
      ))}
      <span className="pl-[5px] text-[11px] leading-4">07:27</span>
    </div>
  </footer>
);

export default function App() {
  return (
    <div
      className="min-h-screen flex flex-col bg-[#ece9d8] text-black text-[11px]"
      style={{ fontFamily: '"DejaVu Sans Condensed", "DejaVu Sans", sans-serif' }}
    >
      <TitleBar />
      <MenuBar />
      <ToolBar />
      <main className="flex-1 flex">
        <SideBar />
        <section className="flex-1 min-w-0 flex flex-col border-t-3 border-l-2 border-[#85837a]">
          <QuoteBar />
          <Chart />
          <SheetTabs />
        </section>
      </main>
      <TaskBar />
    </div>
  );
}
